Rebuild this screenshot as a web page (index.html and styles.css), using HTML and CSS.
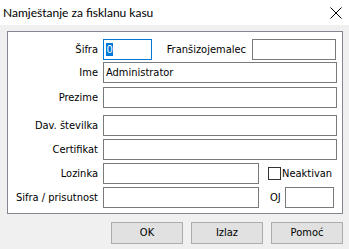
FILE: index.html
```html
<!DOCTYPE html>
<html>
<head>
<meta charset="utf-8">
<link rel="stylesheet" href="styles.css">
</head>
<body>
<div class="window">
  <div class="titlebar">
    <span class="title">Namještanje za fisklanu kasu</span>
    <svg class="close" width="12" height="12" viewBox="0 0 12 12"><path d="M0.5 0.5 L11.5 11.5 M11.5 0.5 L0.5 11.5" stroke="#000" stroke-width="1" fill="none"/></svg>
  </div>
  <div class="content">
    <div class="panel">
      <span class="lbl">Šifra</span>
      <div class="field">
        <div class="input focus w-sifra"><span class="sel">0</span></div>
        <span class="lbl-inline fr">Franšizojemalec</span>
        <div class="input w-fr"></div>
      </div>

      <span class="lbl">Ime</span>
      <div class="input">Administrator</div>

      <span class="lbl">Prezime</span>
      <div class="input"></div>

      <span class="lbl">Dav. številka</span>
      <div class="input"></div>

      <span class="lbl">Certifikat</span>
      <div class="input"></div>

      <span class="lbl">Lozinka</span>
      <div class="field">
        <div class="input w-half"></div>
        <span class="check"></span>
        <span class="lbl-inline">Neaktivan</span>
      </div>

      <span class="lbl">Sifra / prisutnost</span>
      <div class="field">
        <div class="input w-half"></div>
        <span class="lbl-inline oj">OJ</span>
        <div class="input w-oj"></div>
      </div>
    </div>
    <div class="buttons">
      <div class="btn">OK</div>
      <div class="btn">Izlaz</div>
      <div class="btn">Pomoć</div>
    </div>
  </div>
</div>
</body>
</html>
```
FILE: styles.css
```css
* { box-sizing: border-box; }
html, body { margin: 0; padding: 0; }
body {
  width: 349px;
  height: 249px;
  background: #f0f0f0;
  font-family: "DejaVu Sans Condensed", "DejaVu Sans", sans-serif;
  font-size: 11px;
  color: #000;
  overflow: hidden;
}
.window { width: 349px; height: 249px; display: flex; flex-direction: column; }
.titlebar {
  height: 25px;
  background: #fff;
  display: flex;
  align-items: center;
  justify-content: space-between;
  padding: 0 6px 0 3px;
}
.title {
  font-family: Lato, "Noto Sans", sans-serif;
  font-size: 12px;
  color: #000;
}
.close { display: block; margin-right: 1px; }
.content { flex: 1; padding: 6px 6px 0 7px; }
.panel {
  width: 336px;
  height: 183px;
  background: #fff;
  border: 1px solid #828790;
  padding: 7px 5px 5px 0;
  display: grid;
  grid-template-columns: 90px 234px;
  column-gap: 5px;
  grid-template-rows: 23px 25px 28px 24px 24px 24px 21px;
  align-items: start;
}
.lbl {
  text-align: right;
  line-height: 21px;
  height: 21px;
  white-space: nowrap;
}
.field { display: flex; align-items: center; height: 21px; }
.input {
  height: 21px;
  border: 1px solid #7a7a7a;
  background: #fff;
  line-height: 19px;
  padding-left: 2px;
  white-space: nowrap;
}
.input.focus { border-color: #0078d7; }
.sel { background: #0078d7; color: #fff; display: inline-block; line-height: 13px; padding: 0 0.5px; }
.w-sifra { width: 49px; }
.w-fr { width: 84px; margin-right: 1px; }
.w-half { width: 156px; }
.w-oj { width: 49px; margin-left: 4px; }
.lbl-inline { white-space: nowrap; }
.fr { margin-left: auto; margin-right: 6px; }
.check {
  width: 13px; height: 13px;
  border: 1px solid #333;
  background: #fff;
  margin-left: 9px;
  margin-right: 1px;
}
.oj { margin-left: 11px; }
.buttons {
  display: flex;
  justify-content: flex-end;
  gap: 8px;
  margin-top: 8px;
  width: 336px;
}
.btn {
  width: 72px;
  height: 22px;
  background: #e1e1e1;
  border: 1px solid #adadad;
  text-align: center;
  line-height: 20px;
}
```
